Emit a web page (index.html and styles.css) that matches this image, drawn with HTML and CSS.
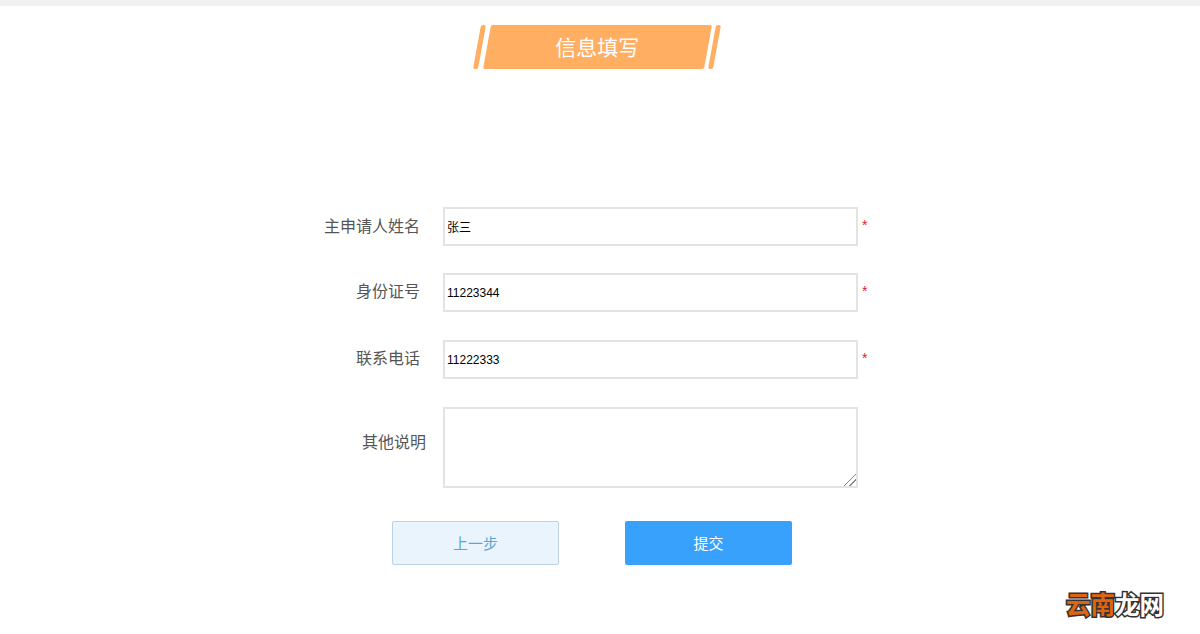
FILE: index.html
```html
<!DOCTYPE html>
<html lang="zh-CN">
<head>
  <meta charset="UTF-8" />
  <meta name="viewport" content="width=device-width, initial-scale=1.0"/>
  <title>信息填写</title>
  <link rel="stylesheet" href="styles.css">
</head>
<body>
  <div class="topbar"></div>
  <div class="container">
    <div class="banner">
      <span class="banner-bar"></span>
      <h1 class="banner-title"><span>信息填写</span></h1>
      <span class="banner-bar banner-bar-right"></span>
    </div>

    <form class="info-form">
      <div class="form-row">
        <label>主申请人姓名</label>
        <input type="text" value="张三" />
        <span class="required">*</span>
      </div>
      <div class="form-row">
        <label>身份证号</label>
        <input type="text" value="11223344" />
        <span class="required">*</span>
      </div>
      <div class="form-row">
        <label>联系电话</label>
        <input type="text" value="11222333" />
        <span class="required">*</span>
      </div>
      <div class="form-row form-row-area">
        <label>其他说明</label>
        <textarea></textarea>
      </div>
      <div class="form-actions">
        <button type="button" class="btn btn-prev">上一步</button>
        <button type="button" class="btn btn-submit">提交</button>
      </div>
    </form>
  </div>
  <div class="watermark"><span class="wm-orange">云南</span><span class="wm-white">龙网</span></div>
</body>
</html>
```

FILE: styles.css
```css
* {
  box-sizing: border-box;
}
html, body {
  height: 100%;
  overflow: hidden;
}
body {
  font-family: "Liberation Sans", "Noto Sans CJK SC", sans-serif;
  margin: 0;
  padding: 0;
  background: #fff;
  color: #555;
}
.topbar {
  height: 6px;
  background: #f1f1f1;
}
.container {
  width: 1193px;
  padding-top: 19px;
}
.banner {
  display: flex;
  justify-content: center;
  height: 44px;
}
.banner-bar {
  width: 5px;
  margin-left: 1px;
  margin-right: 5px;
  background: #ffae62;
  border-radius: 2px;
  transform: skewX(-10.3deg);
}
.banner-bar-right {
  margin-left: 4px;
  margin-right: 0;
}
.banner-title {
  width: 221px;
  margin: 0;
  background: #ffae62;
  border-radius: 2px;
  color: #fff;
  font-size: 21px;
  font-weight: normal;
  line-height: 46px;
  text-align: center;
  transform: skewX(-10.3deg);
}
.banner-title span {
  display: block;
  transform: skewX(10.3deg);
}
.info-form {
  margin-top: 138px;
  padding-left: 290px;
}
.form-row {
  display: flex;
  align-items: center;
  height: 39px;
  margin-bottom: 28px;
}
.form-row:first-child {
  margin-bottom: 27px;
}
.form-row label {
  width: 130px;
  margin-right: 23px;
  margin-bottom: 2px;
  font-size: 16px;
  text-align: right;
  line-height: 20px;
}
.form-row:first-child label {
  margin-bottom: 0;
}
.form-row input {
  width: 415px;
  height: 39px;
  padding: 0 2px;
  border: 2px solid #e3e3e3;
  background: #fff;
  color: #000;
  font-family: inherit;
  font-size: 12px;
  outline: none;
}
.required {
  margin-left: 4px;
  margin-bottom: 3px;
  color: #e0202c;
  font-size: 14px;
}
.form-row-area {
  align-items: flex-start;
  height: 81px;
  margin-bottom: 33px;
}
.form-row-area label {
  width: 136px;
  margin-right: 17px;
  margin-bottom: 0;
  padding-top: 26px;
}
.form-row textarea {
  width: 415px;
  height: 81px;
  margin: 0;
  border: 2px solid #e3e3e3;
  background: #fff;
  outline: none;
}
.form-row textarea::-webkit-resizer {
  background: linear-gradient(135deg, transparent 57%, #888 57%, #888 62%, transparent 62%, transparent 76%, #888 76%, #888 81%, transparent 81%);
}
.form-actions {
  display: flex;
  gap: 66px;
  padding-left: 102px;
}
.btn {
  width: 167px;
  height: 44px;
  padding: 0 0 2px;
  border-radius: 2px;
  font-family: inherit;
  font-size: 15px;
  cursor: pointer;
}
.btn-prev {
  background: #eaf4fd;
  border: 1px solid #b9d2e6;
  color: #5ba6d0;
}
.btn-submit {
  background: #38a1fb;
  border: none;
  color: #fff;
}
.watermark {
  position: absolute;
  left: 1066px;
  top: 592px;
  font-size: 24.5px;
  font-weight: bold;
  line-height: 28px;
  white-space: nowrap;
  -webkit-text-stroke: 3px #333;
  paint-order: stroke fill;
}
.wm-orange {
  color: #df640f;
}
.wm-white {
  color: #fff;
}
```
